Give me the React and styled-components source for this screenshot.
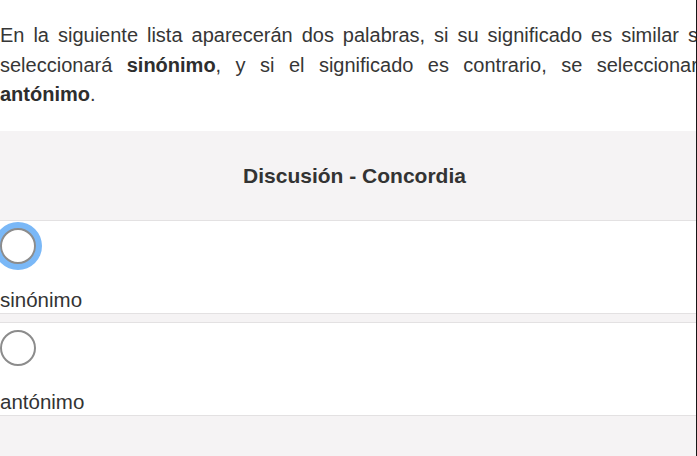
import React from "react";
import styled, { createGlobalStyle, css } from "styled-components";

const GlobalStyle = createGlobalStyle`
  html, body {
    margin: 0;
    padding: 0;
    overflow: hidden;
    background: #ffffff;
  }
  body {
    font-family: "Liberation Sans", Arial, Helvetica, sans-serif;
    color: #333333;
  }
`;

const Viewport = styled.div`
  box-sizing: border-box;
  width: 697px;
  height: 456px;
  overflow: hidden;
  border-right: 1px solid #171717;
  background: #ffffff;
`;

const Page = styled.div`
  width: 709px;
  display: flex;
  flex-direction: column;
`;

const Intro = styled.p`
  margin: 0;
  padding: 21px 0 21.5px;
  font-size: 20px;
  line-height: 29.5px;
  text-align: justify;
  color: #363636;

  strong {
    font-weight: 700;
    color: #2e2e2e;
  }
`;

const Panel = styled.section`
  background: #f5f3f4;
  min-height: 330px;
  display: flex;
  flex-direction: column;
`;

const PanelHeader = styled.h2`
  margin: 0;
  height: 89px;
  display: flex;
  align-items: center;
  justify-content: center;
  font-size: 21px;
  font-weight: 700;
  color: #333333;
`;

const OptionList = styled.div`
  display: flex;
  flex-direction: column;
  gap: 8px;
`;

const OptionRow = styled.label`
  display: flex;
  flex-direction: column;
  align-items: flex-start;
  gap: 24px;
  padding: 7px 0 1px;
  background: #ffffff;
  border-top: 1px solid #e3e1e2;
  border-bottom: 1px solid #e3e1e2;
`;

const Radio = styled.input.attrs({ type: "radio" })`
  appearance: none;
  -webkit-appearance: none;
  box-sizing: border-box;
  width: 36px;
  height: 36px;
  margin: 0;
  border-radius: 50%;
  border: 2px solid #8c8c8c;
  background: #ffffff;
  outline: none;
  ${(p) =>
    p.$focused &&
    css`
      box-shadow: 0 0 0 6px #7ab8f7;
    `}
`;

const OptionText = styled.span`
  font-size: 20.5px;
  line-height: 24px;
  color: #333333;
`;

const options = [
  { id: "sin", label: "sinónimo", focused: true },
  { id: "ant", label: "antónimo", focused: false },
];

export default function App() {
  return (
    <>
      <GlobalStyle />
      <Viewport>
        <Page>
          <Intro>
            En la siguiente lista aparecerán dos palabras, si su significado es
            similar se seleccionará <strong>sinónimo</strong>, y si el
            significado es contrario, se seleccionará <strong>antónimo</strong>.
          </Intro>
          <Panel>
            <PanelHeader>Discusión - Concordia</PanelHeader>
            <OptionList>
              {options.map((o) => (
                <OptionRow key={o.id}>
                  <Radio name="par" $focused={o.focused} readOnly />
                  <OptionText>{o.label}</OptionText>
                </OptionRow>
              ))}
            </OptionList>
          </Panel>
        </Page>
      </Viewport>
    </>
  );
}
